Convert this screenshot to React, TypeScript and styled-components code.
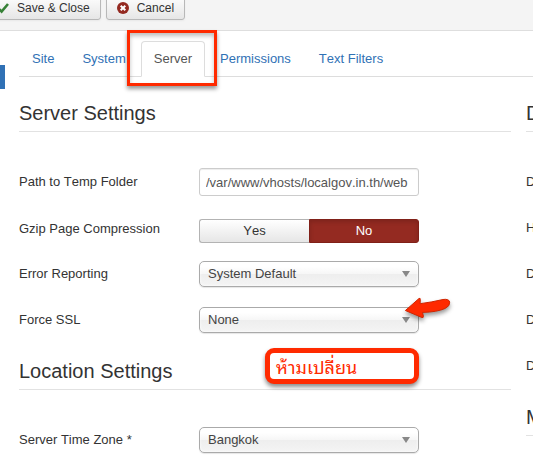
import React from "react";
import styled, { createGlobalStyle, css } from "styled-components";

const GlobalStyle = createGlobalStyle`
  *, *::before, *::after { box-sizing: border-box; }
  body {
    margin: 0;
    background: #fff;
    color: #333;
    font: 13px/18px "Liberation Sans", Arial, Helvetica, sans-serif;
    font-kerning: none;
    overflow: hidden;
  }
  button, input, select { font: inherit; font-kerning: none; }
`;

const red = "#ff2a00";

const Toolbar = styled.header`
  display: flex;
  gap: 5px;
  height: 31px;
  padding-bottom: 10px;
  align-items: flex-end;
  background: #f4f4f4;
  border-bottom: 1px solid #dedede;
  overflow: hidden;
`;

const ToolButton = styled.button<{ $cut?: boolean }>`
  display: flex;
  flex: none;
  align-items: center;
  gap: 8px;
  height: 26px;
  padding: 1px 10px 0;
  margin-left: ${(p) => (p.$cut ? "-14px" : "0")};
  color: #333;
  font-size: 12px;
  white-space: nowrap;
  background: linear-gradient(#fff, #e6e6e6);
  border: 1px solid #b8b8b8;
  border-radius: 3px;
  box-shadow: 0 1px 2px rgba(0, 0, 0, 0.05);
  cursor: pointer;
`;

const Body = styled.div`
  display: flex;
  align-items: flex-start;
`;

const SidebarItem = styled.div`
  flex: none;
  width: 5px;
  height: 24px;
  margin: 34px 14px 0 0;
  background: #3071b5;
`;

const Main = styled.main`
  flex: 1;
  min-width: 0;
`;

const Tabs = styled.nav`
  display: flex;
  gap: 2px;
  margin-top: 10px;
  border-bottom: 1px solid #ddd;
`;

const Tab = styled.a<{ $active?: boolean }>`
  position: relative;
  padding: 8px 12px;
  margin-bottom: -1px;
  color: #3071b5;
  text-decoration: none;
  white-space: nowrap;
  border: 1px solid transparent;
  border-radius: 4px 4px 0 0;
  ${(p) =>
    p.$active &&
    css`
      color: #555;
      background: #fff;
      border-color: #ddd #ddd #fff;
    `}
`;

const TabMarker = styled.span`
  position: absolute;
  inset: -12px -13px -10px -15px;
  border: 3px solid ${red};
  box-shadow: 0 3px 4px rgba(0, 0, 0, 0.4), inset 0 3px 4px rgba(0, 0, 0, 0.25);
  pointer-events: none;
`;

const Columns = styled.form`
  display: flex;
  gap: 15px;
  margin-top: 15px;
  overflow: hidden;
`;

const Column = styled.div`
  flex: 0 0 calc(100% - 22px);
  min-width: 0;
`;

const Legend = styled.h2`
  position: relative;
  margin: 0 0 36px;
  color: #333;
  font-size: 20px;
  font-weight: 400;
  line-height: 39px;
  padding-top: 2px;
  height: 40px;
  border-bottom: 1px solid #e2e2e2;
  white-space: nowrap;
`;

const Rows = styled.div`
  display: grid;
  grid-auto-rows: 28px;
  row-gap: 18px;
  margin-bottom: 16px;
`;

const Row = styled.div`
  display: grid;
  grid-template-columns: 180px 220px;
  align-items: center;
`;

const Label = styled.label`
  white-space: nowrap;
`;

const TextInput = styled.input`
  width: 100%;
  height: 28px;
  padding: 4px 6px;
  color: #555;
  background: #fff;
  border: 1px solid #ccc;
  border-radius: 3px;
  box-shadow: inset 0 1px 1px rgba(0, 0, 0, 0.075);
`;

const Toggle = styled.div`
  display: grid;
  grid-template-columns: 1fr 1fr;
  height: 24px;
  align-self: start;
  margin-top: 5px;
`;

const HiddenRadio = styled.input`
  position: absolute;
  opacity: 0;
  pointer-events: none;
`;

const ToggleOption = styled.label`
  display: flex;
  align-items: center;
  justify-content: center;
  height: 24px;
  color: #333;
  background: linear-gradient(#fff, #e6e6e6);
  border: 1px solid #b3b3b3;
  border-right: 0;
  border-radius: 3px 0 0 3px;
  cursor: pointer;

  &:last-child {
    border: 1px solid #b3b3b3;
    border-radius: 0 3px 3px 0;
  }
  &:has(input:checked) {
    color: #fff;
    background: #942a21;
    border-color: #802018;
    box-shadow: inset 0 2px 4px rgba(0, 0, 0, 0.15);
  }
`;

const SelectBox = styled.div`
  position: relative;
  height: 26px;

  &::after {
    content: "";
    position: absolute;
    top: 10px;
    right: 9px;
    border: 4px solid transparent;
    border-top: 6px solid #888;
    border-bottom: 0;
    pointer-events: none;
  }
`;

const Select = styled.select`
  display: block;
  width: 100%;
  height: 26px;
  padding: 0 24px 0 8px;
  color: #444;
  appearance: none;
  background: linear-gradient(#fff 20%, #f6f6f6 50%, #eee 52%, #f4f4f4 100%);
  border: 1px solid #aaa;
  border-radius: 5px;
  box-shadow: inset 0 0 3px #fff, 0 1px 1px rgba(0, 0, 0, 0.1);
`;

const Arrow = styled.svg`
  position: absolute;
  top: -11px;
  right: -33px;
  z-index: 1;
  overflow: visible;
  filter: drop-shadow(0 3px 2px rgba(0, 0, 0, 0.4));
  pointer-events: none;
`;

const Callout = styled.span`
  position: absolute;
  top: -2px;
  left: 246px;
  width: 154px;
  height: 36px;
  padding-left: 6px;
  color: ${red};
  font-family: "Noto Sans Thai Looped", Loma, Waree, "Noto Serif Thai", "Liberation Sans", sans-serif;
  font-size: 18px;
  line-height: 26px;
  background: #fff;
  border: 5px solid ${red};
  border-radius: 9px;
  box-shadow: 0 3px 4px rgba(0, 0, 0, 0.45);
`;

const CheckIcon = () => (
  <svg width="12" height="12" viewBox="0 0 12 12" aria-hidden="true">
    <path d="M1 6 4.6 9.5 11 2" fill="none" stroke="#378137" strokeWidth="2.6" />
  </svg>
);

const CancelIcon = () => (
  <svg width="12" height="12" viewBox="0 0 12 12" aria-hidden="true">
    <circle cx="6" cy="6" r="6" fill="#942a21" />
    <path d="m3.7 3.7 4.6 4.6m0-4.6L3.7 8.3" stroke="#fff" strokeWidth="2" />
  </svg>
);

const PointerArrow = () => (
  <Arrow width="50" height="24" viewBox="402 296 50 24" aria-hidden="true">
    <path
      d="M405.4 310.5 419 298.5q1.4-.8 1.3 1l-.2 4.200q12-1.600 22.900-4.200 6-.9 6.700 2.600.5 4-4.700 6.400-8 3.600-22.500 3.900l.9 3.800q.2 1.800-1.500 1.300Z"
      fill={red}
      stroke="#cf2500"
      strokeWidth="1"
      strokeLinejoin="round"
    />
  </Arrow>
);

type ChoiceProps = { id: string; label: string; value: string; children?: React.ReactNode };

const Choice = ({ id, label, value, children }: ChoiceProps) => (
  <Row>
    <Label htmlFor={id}>{label}</Label>
    <SelectBox>
      <Select id={id} defaultValue={value}>
        <option>{value}</option>
      </Select>
      {children}
    </SelectBox>
  </Row>
);

const databaseFields = [
  "Database Type",
  "Host",
  "Database Username",
  "Database Name",
  "Database Tables Prefix",
];

export default function App() {
  return (
    <>
      <GlobalStyle />
      <Toolbar>
        <ToolButton type="button" $cut>
          <CheckIcon />
          Save &amp; Close
        </ToolButton>
        <ToolButton type="button">
          <CancelIcon />
          Cancel
        </ToolButton>
      </Toolbar>
      <Body>
        <SidebarItem />
        <Main>
          <Tabs>
            <Tab href="#site">Site</Tab>
            <Tab href="#system">System</Tab>
            <Tab href="#server" $active aria-current="page">
              Server
              <TabMarker />
            </Tab>
            <Tab href="#permissions">Permissions</Tab>
            <Tab href="#filters">Text Filters</Tab>
          </Tabs>
          <Columns>
            <Column>
              <Legend>Server Settings</Legend>
              <Rows>
                <Row>
                  <Label htmlFor="tmp">Path to Temp Folder</Label>
                  <TextInput id="tmp" type="text" defaultValue="/var/www/vhosts/localgov.in.th/web" />
                </Row>
                <Row>
                  <Label as="span" id="gzip">Gzip Page Compression</Label>
                  <Toggle role="radiogroup" aria-labelledby="gzip">
                    <ToggleOption>
                      <HiddenRadio type="radio" name="gzip" />
                      Yes
                    </ToggleOption>
                    <ToggleOption>
                      <HiddenRadio type="radio" name="gzip" defaultChecked />
                      No
                    </ToggleOption>
                  </Toggle>
                </Row>
                <Choice id="errors" label="Error Reporting" value="System Default" />
                <Choice id="ssl" label="Force SSL" value="None">
                  <PointerArrow />
                </Choice>
              </Rows>
              <Legend>
                Location Settings
                <Callout lang="th">ห้ามเปลี่ยน</Callout>
              </Legend>
              <Rows>
                <Choice id="zone" label="Server Time Zone *" value="Bangkok" />
              </Rows>
            </Column>
            <Column>
              <Legend>Database Settings</Legend>
              <Rows>
                {databaseFields.map((name) => (
                  <Row key={name}>
                    <Label as="span">{name}</Label>
                  </Row>
                ))}
              </Rows>
              <Legend>Mail Settings</Legend>
            </Column>
          </Columns>
        </Main>
      </Body>
    </>
  );
}
